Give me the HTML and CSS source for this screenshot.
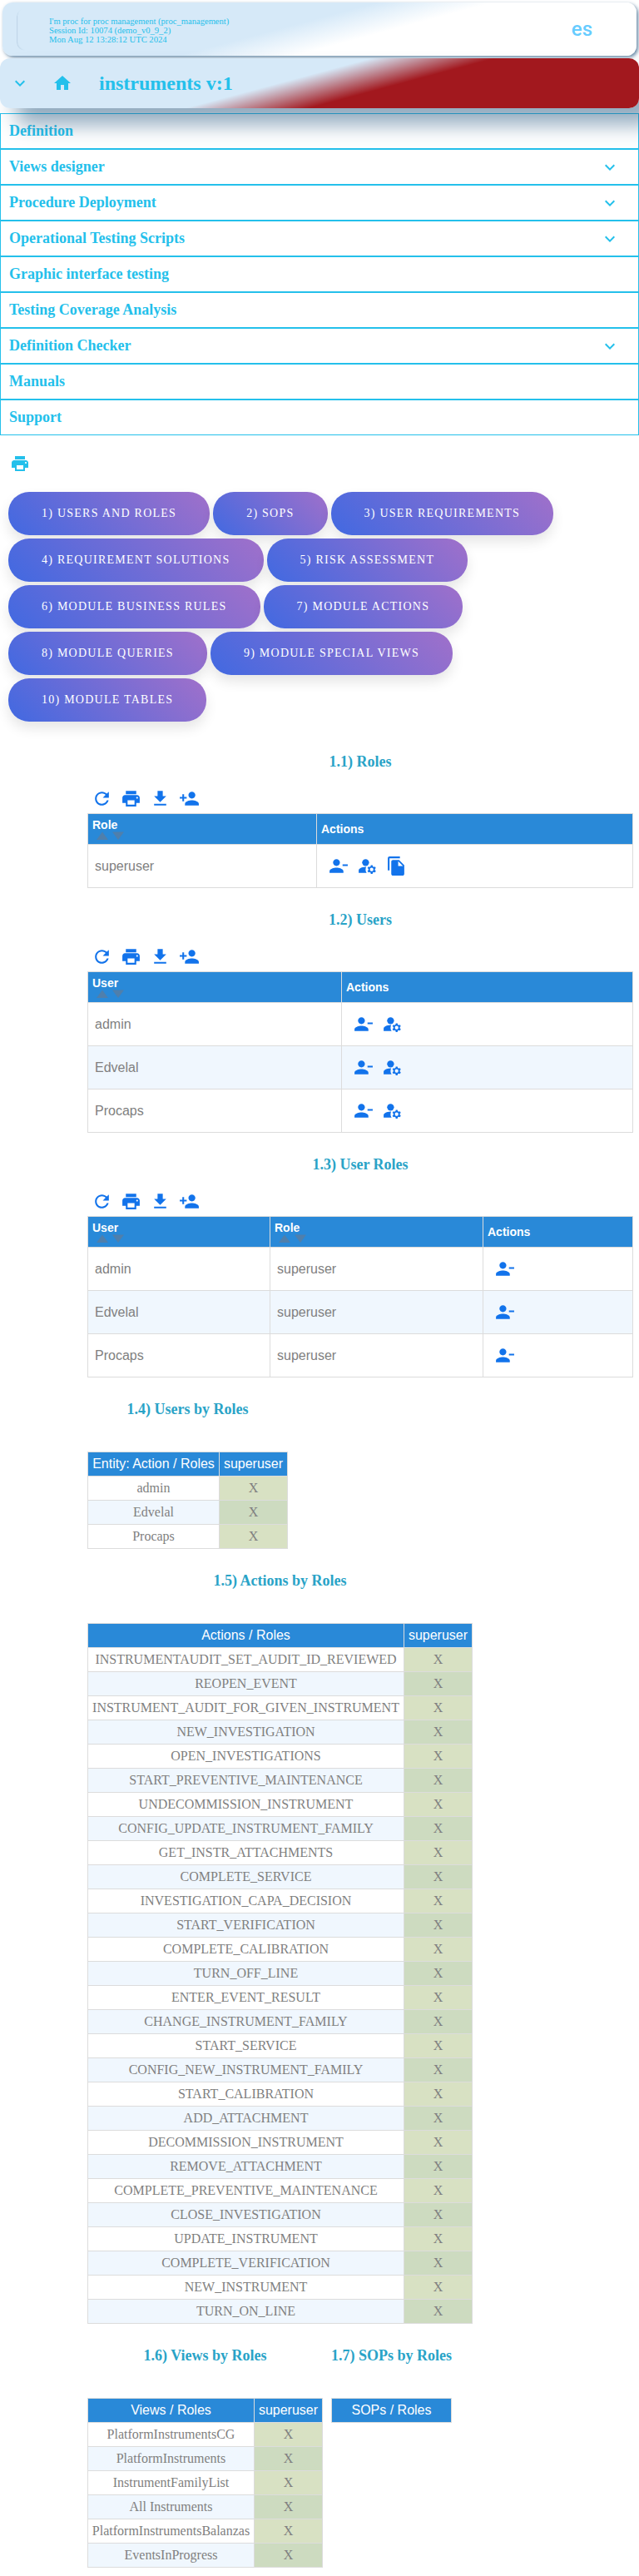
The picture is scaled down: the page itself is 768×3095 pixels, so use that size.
FILE: index.html
```html
<!DOCTYPE html>
<html lang="en">
<head>
<meta charset="utf-8">
<title>instruments v:1</title>
<link rel="stylesheet" href="styles.css">
</head>
<body>
<svg class="sprite" aria-hidden="true">
  <symbol id="chevron" viewBox="0 0 24 24"><path d="M16.59 8.59L12 13.17 7.41 8.59 6 10l6 6 6-6z"/></symbol>
  <symbol id="home" viewBox="0 0 24 24"><path d="M10 20v-6h4v6h5v-8h3L12 3 2 12h3v8z"/></symbol>
  <symbol id="print" viewBox="0 0 24 24"><path d="M19 8H5c-1.66 0-3 1.34-3 3v6h4v4h12v-4h4v-6c0-1.66-1.34-3-3-3zm-3 11H8v-5h8v5zm3-7c-.55 0-1-.45-1-1s.45-1 1-1 1 .45 1 1-.45 1-1 1zm-1-9H6v4h12V3z"/></symbol>
  <symbol id="refresh" viewBox="0 0 24 24"><path d="M17.65 6.35C16.2 4.9 14.21 4 12 4c-4.42 0-7.99 3.58-7.99 8s3.57 8 7.99 8c3.73 0 6.84-2.55 7.73-6h-2.08c-.82 2.33-3.04 4-5.65 4-3.31 0-6-2.69-6-6s2.69-6 6-6c1.66 0 3.14.69 4.22 1.78L13 11h7V4l-2.35 2.35z"/></symbol>
  <symbol id="download" viewBox="0 0 24 24"><path d="M19 9h-4V3H9v6H5l7 7 7-7zM5 18v2h14v-2H5z"/></symbol>
  <symbol id="person-add" viewBox="0 0 24 24"><path d="M15 12c2.21 0 4-1.79 4-4s-1.79-4-4-4-4 1.79-4 4 1.79 4 4 4zm-9-2V7H4v3H1v2h3v3h2v-3h3v-2H6zm9 4c-2.67 0-8 1.34-8 4v2h16v-2c0-2.66-5.33-4-8-4z"/></symbol>
  <symbol id="person-remove" viewBox="0 0 24 24"><path d="M14 8c0-2.21-1.79-4-4-4S6 5.79 6 8s1.79 4 4 4 4-1.79 4-4zm3 2v2h6v-2h-6zM2 18v2h16v-2c0-2.66-5.33-4-8-4s-8 1.34-8 4z"/></symbol>
  <symbol id="manage" viewBox="0 0 24 24"><circle cx="10" cy="8" r="4"/><path d="M10.67 13.02c-.22-.01-.44-.02-.67-.02-2.42 0-4.68.67-6.61 1.82-.88.52-1.39 1.5-1.39 2.53V20h9.26c-.79-1.13-1.26-2.51-1.26-4 0-1.07.25-2.07.67-2.98zM20.75 16c0-.22-.03-.42-.06-.63l1.14-1.01-1-1.73-1.45.49c-.32-.27-.68-.48-1.08-.63L18 11h-2l-.3 1.49c-.4.15-.76.36-1.08.63l-1.45-.49-1 1.73 1.14 1.01c-.03.21-.06.41-.06.63s.03.42.06.63l-1.14 1.01 1 1.73 1.45-.49c.32.27.68.48 1.08.63L16 21h2l.3-1.49c.4-.15.76-.36 1.08-.63l1.45.49 1-1.73-1.14-1.01c.03-.21.06-.41.06-.63zM17 18c-1.1 0-2-.9-2-2s.9-2 2-2 2 .9 2 2-.9 2-2 2z"/></symbol>
  <symbol id="copy" viewBox="0 0 24 24"><path d="M16 1H4c-1.1 0-2 .9-2 2v14h2V3h12V1zm-1 4l6 6v10c0 1.1-.9 2-2 2H7.99C6.89 23 6 22.1 6 21l.01-14c0-1.1.89-2 1.99-2h7zm-1 7h5.5L14 6.5V12z"/></symbol>
  <symbol id="sort" viewBox="0 0 34 10"><path d="M0 10L7 0.5 14 10zM19 0.5h14L26 10z"/></symbol>
</svg>

<header class="session">
  <div class="session-notch"></div>
  <div class="session-info">I'm proc for proc management (proc_management)<br>Session Id: 10074 (demo_v0_9_2)<br>Mon Aug 12 13:28:12 UTC 2024</div>
  <div class="lang">es</div>
</header>
<div class="titlebar">
  <svg class="icon"><use href="#chevron"/></svg>
  <svg class="icon home"><use href="#home"/></svg>
  <h1 class="title">instruments v:1</h1>
</div>

<nav class="menu">
  <div class="menu-item">Definition</div>
  <div class="menu-item">Views designer<svg class="icon"><use href="#chevron"/></svg></div>
  <div class="menu-item">Procedure Deployment<svg class="icon"><use href="#chevron"/></svg></div>
  <div class="menu-item">Operational Testing Scripts<svg class="icon"><use href="#chevron"/></svg></div>
  <div class="menu-item">Graphic interface testing</div>
  <div class="menu-item">Testing Coverage Analysis</div>
  <div class="menu-item">Definition Checker<svg class="icon"><use href="#chevron"/></svg></div>
  <div class="menu-item">Manuals</div>
  <div class="menu-item">Support</div>
</nav>

<div class="print-row"><svg class="icon"><use href="#print"/></svg></div>

<div class="pills">
  <button class="pill">1) Users and Roles</button>
  <button class="pill">2) SOPs</button>
  <button class="pill">3) User Requirements</button>
  <button class="pill">4) Requirement Solutions</button>
  <button class="pill">5) Risk Assessment</button>
  <button class="pill">6) Module Business Rules</button>
  <button class="pill">7) Module Actions</button>
  <button class="pill">8) Module Queries</button>
  <button class="pill">9) Module Special Views</button>
  <button class="pill">10) Module Tables</button>
</div>

<main class="content">
  <section class="block">
    <h2 class="heading">1.1) Roles</h2>
    <div class="toolbar"><svg class="icon"><use href="#refresh"/></svg><svg class="icon"><use href="#print"/></svg><svg class="icon"><use href="#download"/></svg><svg class="icon"><use href="#person-add"/></svg></div>
    <table class="grid">
      <colgroup><col class="w275"><col></colgroup>
      <tr><th>Role<svg class="sort"><use href="#sort"/></svg></th><th>Actions</th></tr>
      <tr><td>superuser</td><td><div class="actions"><svg class="icon"><use href="#person-remove"/></svg><svg class="icon"><use href="#manage"/></svg><svg class="icon"><use href="#copy"/></svg></div></td></tr>
    </table>
  </section>

  <section class="block">
    <h2 class="heading">1.2) Users</h2>
    <div class="toolbar"><svg class="icon"><use href="#refresh"/></svg><svg class="icon"><use href="#print"/></svg><svg class="icon"><use href="#download"/></svg><svg class="icon"><use href="#person-add"/></svg></div>
    <table class="grid">
      <colgroup><col class="w305"><col></colgroup>
      <tr><th>User<svg class="sort"><use href="#sort"/></svg></th><th>Actions</th></tr>
      <tr><td>admin</td><td><div class="actions"><svg class="icon"><use href="#person-remove"/></svg><svg class="icon"><use href="#manage"/></svg></div></td></tr>
      <tr><td>Edvelal</td><td><div class="actions"><svg class="icon"><use href="#person-remove"/></svg><svg class="icon"><use href="#manage"/></svg></div></td></tr>
      <tr><td>Procaps</td><td><div class="actions"><svg class="icon"><use href="#person-remove"/></svg><svg class="icon"><use href="#manage"/></svg></div></td></tr>
    </table>
  </section>

  <section class="block">
    <h2 class="heading">1.3) User Roles</h2>
    <div class="toolbar"><svg class="icon"><use href="#refresh"/></svg><svg class="icon"><use href="#print"/></svg><svg class="icon"><use href="#download"/></svg><svg class="icon"><use href="#person-add"/></svg></div>
    <table class="grid">
      <colgroup><col class="w219"><col class="w256"><col></colgroup>
      <tr><th>User<svg class="sort"><use href="#sort"/></svg></th><th>Role<svg class="sort"><use href="#sort"/></svg></th><th>Actions</th></tr>
      <tr><td>admin</td><td>superuser</td><td><div class="actions"><svg class="icon"><use href="#person-remove"/></svg></div></td></tr>
      <tr><td>Edvelal</td><td>superuser</td><td><div class="actions"><svg class="icon"><use href="#person-remove"/></svg></div></td></tr>
      <tr><td>Procaps</td><td>superuser</td><td><div class="actions"><svg class="icon"><use href="#person-remove"/></svg></div></td></tr>
    </table>
  </section>

  <section class="block matrix-users">
    <h2 class="heading">1.4) Users by Roles</h2>
    <table class="matrix">
      <colgroup><col><col class="w82"></colgroup>
      <tr><th>Entity: Action / Roles</th><th>superuser</th></tr>
      <tr><td>admin</td><td>X</td></tr>
      <tr><td>Edvelal</td><td>X</td></tr>
      <tr><td>Procaps</td><td>X</td></tr>
    </table>
  </section>

  <section class="block matrix-actions">
    <h2 class="heading">1.5) Actions by Roles</h2>
    <table class="matrix">
      <colgroup><col><col class="w82"></colgroup>
      <tr><th>Actions / Roles</th><th>superuser</th></tr>
      <tr><td>INSTRUMENTAUDIT_SET_AUDIT_ID_REVIEWED</td><td>X</td></tr>
      <tr><td>REOPEN_EVENT</td><td>X</td></tr>
      <tr><td>INSTRUMENT_AUDIT_FOR_GIVEN_INSTRUMENT</td><td>X</td></tr>
      <tr><td>NEW_INVESTIGATION</td><td>X</td></tr>
      <tr><td>OPEN_INVESTIGATIONS</td><td>X</td></tr>
      <tr><td>START_PREVENTIVE_MAINTENANCE</td><td>X</td></tr>
      <tr><td>UNDECOMMISSION_INSTRUMENT</td><td>X</td></tr>
      <tr><td>CONFIG_UPDATE_INSTRUMENT_FAMILY</td><td>X</td></tr>
      <tr><td>GET_INSTR_ATTACHMENTS</td><td>X</td></tr>
      <tr><td>COMPLETE_SERVICE</td><td>X</td></tr>
      <tr><td>INVESTIGATION_CAPA_DECISION</td><td>X</td></tr>
      <tr><td>START_VERIFICATION</td><td>X</td></tr>
      <tr><td>COMPLETE_CALIBRATION</td><td>X</td></tr>
      <tr><td>TURN_OFF_LINE</td><td>X</td></tr>
      <tr><td>ENTER_EVENT_RESULT</td><td>X</td></tr>
      <tr><td>CHANGE_INSTRUMENT_FAMILY</td><td>X</td></tr>
      <tr><td>START_SERVICE</td><td>X</td></tr>
      <tr><td>CONFIG_NEW_INSTRUMENT_FAMILY</td><td>X</td></tr>
      <tr><td>START_CALIBRATION</td><td>X</td></tr>
      <tr><td>ADD_ATTACHMENT</td><td>X</td></tr>
      <tr><td>DECOMMISSION_INSTRUMENT</td><td>X</td></tr>
      <tr><td>REMOVE_ATTACHMENT</td><td>X</td></tr>
      <tr><td>COMPLETE_PREVENTIVE_MAINTENANCE</td><td>X</td></tr>
      <tr><td>CLOSE_INVESTIGATION</td><td>X</td></tr>
      <tr><td>UPDATE_INSTRUMENT</td><td>X</td></tr>
      <tr><td>COMPLETE_VERIFICATION</td><td>X</td></tr>
      <tr><td>NEW_INSTRUMENT</td><td>X</td></tr>
      <tr><td>TURN_ON_LINE</td><td>X</td></tr>
    </table>
  </section>

  <div class="side-by-side">
    <section class="block matrix-views">
      <h2 class="heading">1.6) Views by Roles</h2>
      <table class="matrix">
        <colgroup><col><col class="w82"></colgroup>
        <tr><th>Views / Roles</th><th>superuser</th></tr>
        <tr><td>PlatformInstrumentsCG</td><td>X</td></tr>
        <tr><td>PlatformInstruments</td><td>X</td></tr>
        <tr><td>InstrumentFamilyList</td><td>X</td></tr>
        <tr><td>All Instruments</td><td>X</td></tr>
        <tr><td>PlatformInstrumentsBalanzas</td><td>X</td></tr>
        <tr><td>EventsInProgress</td><td>X</td></tr>
      </table>
    </section>
    <section class="block matrix-sops">
      <h2 class="heading">1.7) SOPs by Roles</h2>
      <table class="matrix">
        <tr><th>SOPs / Roles</th></tr>
      </table>
    </section>
  </div>
</main>
</body>
</html>
```
FILE: styles.css
```css
* { box-sizing: border-box; }
html { overflow-x: hidden; }
body {
  margin: 0;
  padding-top: 3px;
  overflow-x: hidden;
  background: #fff;
  color: #808080;
  font-family: "Liberation Serif", "Times New Roman", serif;
  font-size: 16px;
}
.sprite { display: none; }
.icon { display: block; flex: none; width: 24px; height: 24px; fill: currentColor; }

/* session strip */
.session {
  display: flex;
  align-items: center;
  height: 64px;
  margin: 0 3px;
  border-radius: 12px;
  background: linear-gradient(165deg, #d6e9f8 45%, #fff 59%);
  box-shadow: 2px 2px 4px rgba(38, 87, 128, .7);
  color: #24c0eb;
}
.session-notch {
  width: 10px;
  height: 51px;
  margin-left: 17px;
  border-radius: 12px 0 0 12px;
  box-shadow: inset 1px -1px 1px rgba(38, 87, 128, .15);
  -webkit-mask-image: linear-gradient(to right, #000, transparent);
  mask-image: linear-gradient(to right, #000, transparent);
}
.session-info { margin-left: 29px; padding-top: 2px; font-size: 10.6px; line-height: 11px; white-space: nowrap; }
.lang { margin: 0 53px 0 auto; color: #66ccff; font-family: Roboto, "Liberation Sans", sans-serif; font-size: 24px; font-weight: 500; line-height: 28px; }

/* title bar casts its shadow over the menu */
.titlebar {
  position: relative;
  z-index: 1;
  display: flex;
  align-items: center;
  height: 60px;
  margin-top: 3px;
  padding-left: 12px;
  border-radius: 12px;
  background: linear-gradient(165deg, #d6e9f8 45%, #a2181e 60%);
  box-shadow: 20px 20px 25px rgba(38, 87, 128, .5);
  color: #24c0eb;
}
.home { margin-left: 27px; }
.title { margin: 0 0 0 32px; font-size: 24px; line-height: 28px; }

.menu { margin-top: 6px; }
.menu-item {
  display: flex;
  align-items: center;
  justify-content: space-between;
  height: 43px;
  padding: 0 22px 0 10px;
  border: 1px solid #24c0eb;
  color: #24c0eb;
  font-size: 18px;
  font-weight: bold;
}
.print-row { padding: 22px 12px; color: #24c0eb; }

.pills { display: flex; flex-wrap: wrap; gap: 4px; padding: 0 10px; }
.pill {
  height: 52px;
  padding: 0 40px;
  border: 0;
  border-radius: 25px;
  background: linear-gradient(45deg, #4169e1, #a070ca);
  box-shadow: 0 8px 15px rgba(0, 0, 0, .1);
  color: #fff;
  font-family: inherit;
  font-size: 14px;
  letter-spacing: 1.25px;
  text-transform: uppercase;
}

.content { padding: 10px 7px 10px 105px; }
.block { padding-top: 28px; }
.heading { margin: 0; color: #29a3c7; font-size: 18px; line-height: 20px; text-align: center; white-space: nowrap; }
.toolbar { display: flex; gap: 10px; margin: 22px 0 5px; padding-left: 5px; color: #1273eb; }
.toolbar .icon, .actions .icon { width: 25px; height: 25px; }

table { width: 100%; table-layout: fixed; border-spacing: 0; border: solid #dcdcdc; border-width: 1px 0 0 1px; }
th, td { border: solid #dcdcdc; border-width: 0 1px 1px 0; }
th { background: #2989d8; color: #fff; }
tr:nth-child(odd) td { background: #f0f7fe; }

.grid { font-family: "Liberation Sans", Arial, sans-serif; }
.grid th { height: 37px; padding: 0 5px; font-size: 14px; line-height: 16px; text-align: left; }
.grid td { height: 52px; padding: 0 8px; }
.sort { display: block; width: 34px; height: 10px; margin-left: 5px; fill: #4f7fac; }
.actions { display: flex; gap: 10px; padding-left: 5px; color: #1273eb; }

.matrix { margin-top: 41px; text-align: center; }
.matrix th { height: 29px; padding: 0; font: 16px/28px "Liberation Sans", Arial, sans-serif; white-space: nowrap; }
.matrix td { height: 29px; padding: 0 0 1px; }
.matrix td:nth-child(2) { background: #d8e1c3; }
.matrix tr:nth-child(odd) td:nth-child(2) { background: #cddbc0; }

.matrix-users { width: 241px; }
.matrix-actions { width: 463px; }
.matrix-views { width: 283px; }
.matrix-sops { width: 145px; }
.side-by-side { display: flex; align-items: flex-start; gap: 10px; }

.w275 { width: 275px; }
.w305 { width: 305px; }
.w219 { width: 219px; }
.w256 { width: 256px; }
.w82 { width: 82px; }
```
